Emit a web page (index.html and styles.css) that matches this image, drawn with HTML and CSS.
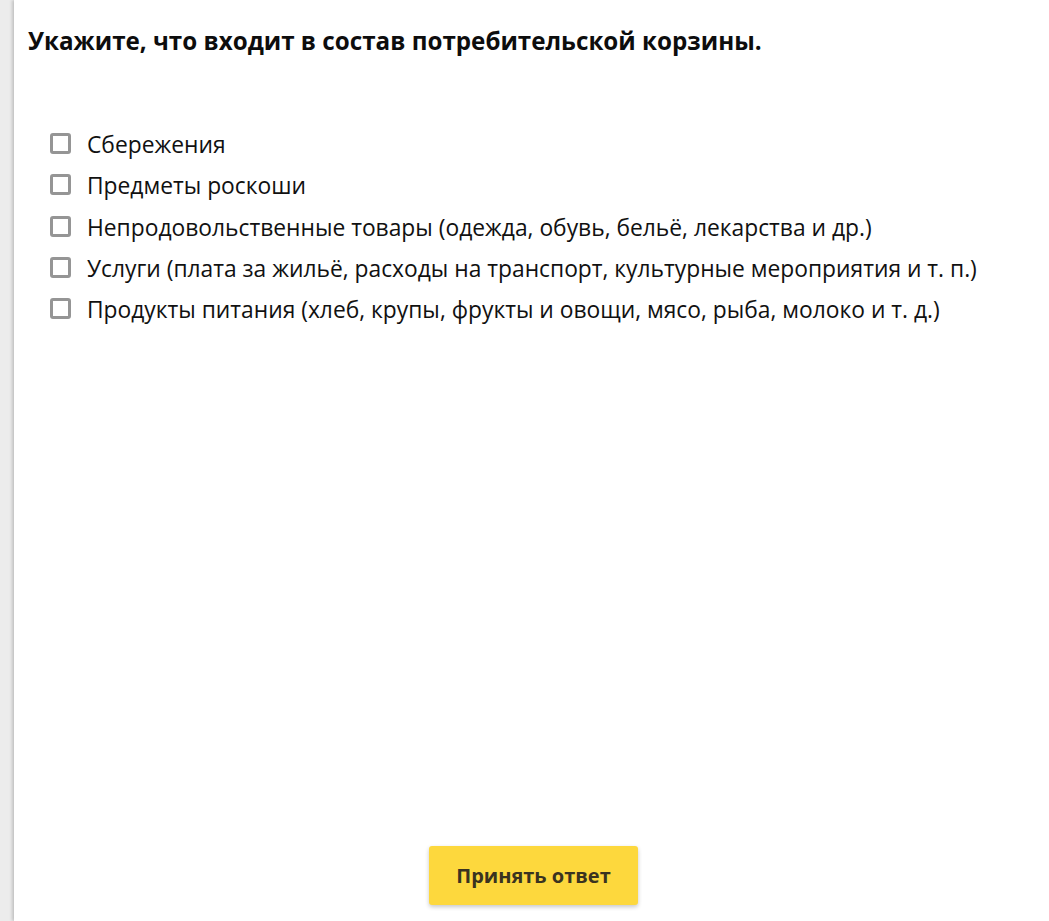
FILE: index.html
```html
<!DOCTYPE html>
<html lang="ru">
<head>
<meta charset="utf-8">
<link rel="stylesheet" href="styles.css">
</head>
<body>
<main class="card">
  <h1 class="question">Укажите, что входит в состав потребительской корзины.</h1>
  <ul class="options">
    <li class="option"><span class="box"></span><span class="label">Сбережения</span></li>
    <li class="option"><span class="box"></span><span class="label">Предметы роскоши</span></li>
    <li class="option"><span class="box"></span><span class="label">Непродовольственные товары (одежда, обувь, бельё, лекарства и др.)</span></li>
    <li class="option"><span class="box"></span><span class="label">Услуги (плата за жильё, расходы на транспорт, культурные мероприятия и т. п.)</span></li>
    <li class="option"><span class="box"></span><span class="label">Продукты питания (хлеб, крупы, фрукты и овощи, мясо, рыба, молоко и т. д.)</span></li>
  </ul>
  <div class="actions">
    <button class="submit">Принять ответ</button>
  </div>
</main>
</body>
</html>
```

FILE: styles.css
```css
html, body {
  margin: 0;
  padding: 0;
  height: 100%;
}
body {
  background: #ececec;
  font-family: "Open Sans", "Noto Sans", sans-serif;
  color: #111;
  overflow: hidden;
}
.card {
  margin-left: 14px;
  min-height: 100vh;
  box-sizing: border-box;
  background: #fff;
  box-shadow: -2px 0 3px rgba(0,0,0,0.18);
  display: flex;
  flex-direction: column;
  padding: 25px 0 16px 14px;
}
.question {
  margin: 0;
  font-size: 24.2px;
  font-weight: 700;
  line-height: 32px;
  color: #0d0d0d;
}
.options {
  list-style: none;
  margin: 73px 0 0 0;
  padding: 0 0 0 22px;
  display: flex;
  flex-direction: column;
  gap: 11.25px;
}
.option {
  display: flex;
  align-items: center;
  gap: 16px;
  height: 30px;
}
.box {
  width: 21px;
  height: 21px;
  box-sizing: border-box;
  border: 3px solid #959595;
  border-radius: 3px;
  flex: none;
  margin-top: -3px;
}
.label {
  font-size: 22.8px;
  line-height: 30px;
  color: #111;
}
.actions {
  margin-top: auto;
  display: flex;
  justify-content: center;
  padding-right: 10px;
}
.submit {
  width: 209px;
  height: 59px;
  border: none;
  border-radius: 3px;
  background: #fdd83d;
  box-shadow: 0 2px 4px rgba(0,0,0,0.22);
  font-family: "Open Sans", "Noto Sans", sans-serif;
  font-size: 20px;
  font-weight: 700;
  color: #3a3320;
}
```
